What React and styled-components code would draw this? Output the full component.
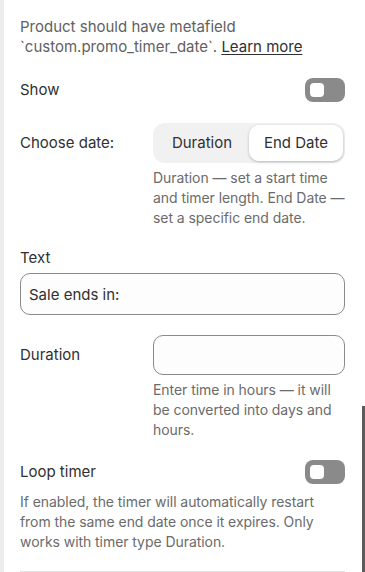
import React, { useState } from 'react';
import styled, { createGlobalStyle } from 'styled-components';

const GlobalStyle = createGlobalStyle`
  html, body {
    margin: 0;
    padding: 0;
    background: #ffffff;
  }
  body {
    font-family: Inter, "Noto Sans", "Liberation Sans", sans-serif;
    -webkit-font-smoothing: antialiased;
  }
`;

const Panel = styled.div`
  position: relative;
  height: 572px;
  overflow: hidden;
  box-sizing: border-box;
  border-left: 4px solid #ececec;
  padding: 17px 20px 0 16px;
  display: flex;
  flex-direction: column;
  color: #303030;
  font-size: 15px;
  line-height: 20px;
`;

const Note = styled.p`
  margin: 0;
  color: #616161;
`;

const LearnLink = styled.a`
  color: #303030;
  text-decoration: underline;
  text-underline-offset: 2px;
  cursor: pointer;
`;

const Row = styled.div`
  display: flex;
  align-items: center;
  justify-content: space-between;
  margin-top: ${(p) => p.$top || 0}px;
`;

const Label = styled.span`
  color: #303030;
  flex: ${(p) => (p.$fixed ? '0 0 133px' : '1 1 auto')};
`;

const Toggle = styled.button`
  position: relative;
  width: 40px;
  height: 24px;
  border: 0;
  border-radius: 8px;
  background: ${(p) => (p.$on ? '#303030' : '#8a8a8a')};
  padding: 0;
  cursor: pointer;
  flex: 0 0 auto;

  &::after {
    content: '';
    position: absolute;
    top: 5px;
    left: ${(p) => (p.$on ? '21px' : '5px')};
    width: 14px;
    height: 14px;
    border-radius: 4px;
    background: #ffffff;
  }
`;

const Segmented = styled.div`
  flex: 1 1 auto;
  height: 40px;
  box-sizing: border-box;
  display: grid;
  grid-template-columns: 1fr 1fr;
  padding: 2px;
  background: #f1f1f1;
  border-radius: 12px;
`;

const SegButton = styled.button`
  border: 0;
  border-radius: 10px;
  font: inherit;
  font-size: 15px;
  color: #303030;
  cursor: pointer;
  background: ${(p) => (p.$active ? '#ffffff' : 'transparent')};
  box-shadow: ${(p) => (p.$active ? '0 1px 3px rgba(0,0,0,0.25)' : 'none')};
`;

const Help = styled.p`
  margin: ${(p) => p.$top || 5}px 0 0 ${(p) => p.$indent || 0}px;
  font-size: 14px;
  letter-spacing: -0.06px;
  color: #6b6b6b;
`;

const FieldLabel = styled.div`
  margin-top: 20px;
  color: #303030;
`;

const Input = styled.input`
  box-sizing: border-box;
  width: 100%;
  height: 40px;
  margin-top: ${(p) => p.$top || 0}px;
  border: 1px solid #8a8a8a;
  border-radius: 10px;
  background: #fdfdfd;
  padding: 0 8px;
  font: inherit;
  font-size: 15px;
  color: #303030;
  outline: none;
  flex: 1 1 auto;
`;

const Divider = styled.hr`
  margin: 19px 0 0;
  border: 0;
  border-top: 1px solid #e3e3e3;
`;

const ScrollThumb = styled.div`
  position: absolute;
  right: 0;
  top: 406px;
  width: 3px;
  height: 200px;
  background: #5c5c5c;
`;

export default function App() {
  const [show, setShow] = useState(false);
  const [loop, setLoop] = useState(false);
  const [mode, setMode] = useState('end');
  const [text, setText] = useState('Sale ends in:');
  const [hours, setHours] = useState('');

  return (
    <>
      <GlobalStyle />
      <Panel>
        <Note>
          Product should have metafield `custom.promo_timer_date`.{' '}
          <LearnLink>Learn more</LearnLink>
        </Note>

        <Row $top={21}>
          <Label>Show</Label>
          <Toggle $on={show} onClick={() => setShow(!show)} aria-label="Show" />
        </Row>

        <Row $top={21}>
          <Label $fixed>Choose date:</Label>
          <Segmented>
            <SegButton $active={mode === 'duration'} onClick={() => setMode('duration')}>
              Duration
            </SegButton>
            <SegButton $active={mode === 'end'} onClick={() => setMode('end')}>
              End Date
            </SegButton>
          </Segmented>
        </Row>
        <Help $indent={133}>
          Duration — set a start time and timer length. End Date — set a specific end date.
        </Help>

        <FieldLabel>Text</FieldLabel>
        <Input $top={5} value={text} onChange={(e) => setText(e.target.value)} />

        <Row $top={20}>
          <Label $fixed>Duration</Label>
          <Input value={hours} onChange={(e) => setHours(e.target.value)} />
        </Row>
        <Help $indent={133}>
          Enter time in hours — it will be converted into days and hours.
        </Help>

        <Row $top={20}>
          <Label>Loop timer</Label>
          <Toggle $on={loop} onClick={() => setLoop(!loop)} aria-label="Loop timer" />
        </Row>
        <Help $top={8}>
          If enabled, the timer will automatically restart from the same end date once it
          expires. Only works with timer type Duration.
        </Help>

        <Divider />
        <ScrollThumb />
      </Panel>
    </>
  );
}
